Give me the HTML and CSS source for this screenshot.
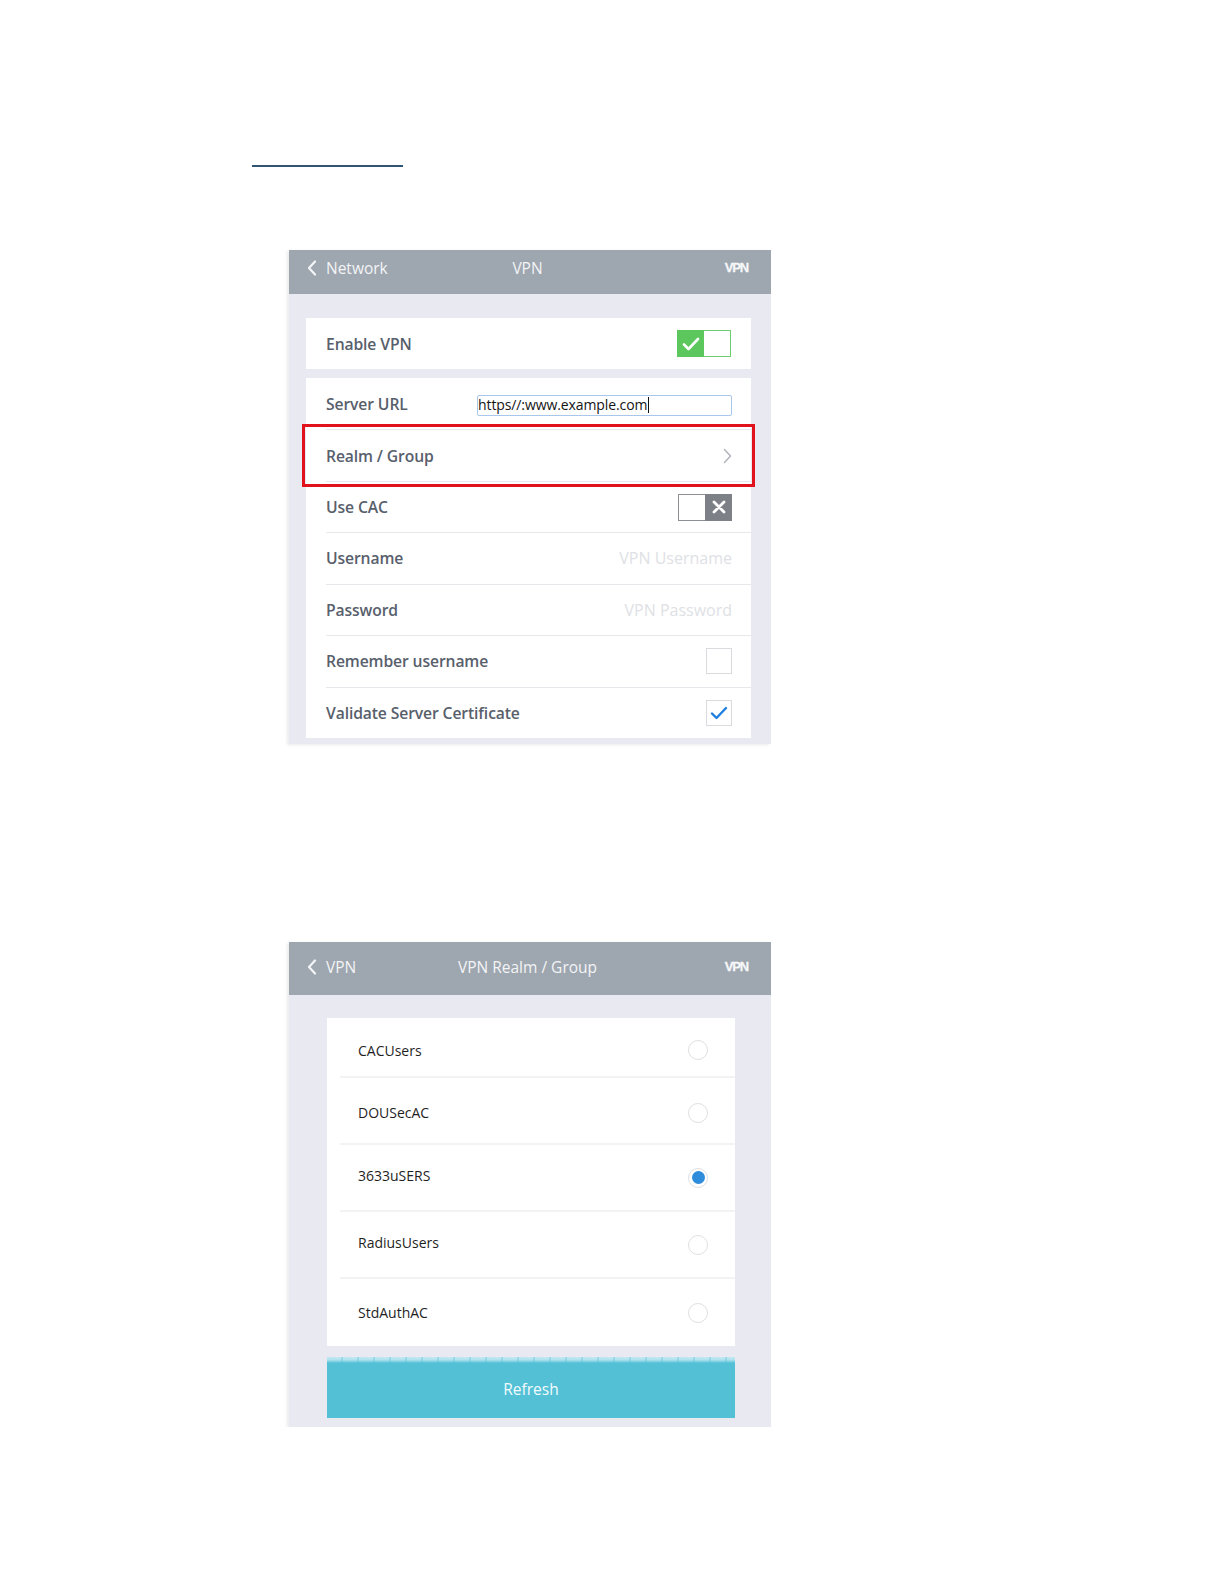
FILE: index.html
```html
<!DOCTYPE html>
<html>
<head>
<meta charset="utf-8">
<link rel="stylesheet" href="styles.css">
</head>
<body>
<div class="page">
  <div class="rule"></div>

  <section class="panel panel-vpn">
    <header class="bar bar-short">
      <div class="back">
        <svg class="chev" width="10" height="16" viewBox="0 0 10 16"><polyline points="8,1.5 2,8 8,14.5" fill="none" stroke="#f4f5f7" stroke-width="2.2" stroke-linecap="round" stroke-linejoin="round"/></svg>
        <span>Network</span>
      </div>
      <div class="title">VPN</div>
      <div class="logo">VPN</div>
    </header>
    <div class="body body-vpn">
      <div class="card card-single">
        <div class="row">
          <span class="label">Enable VPN</span>
          <span class="toggle toggle-on">
            <span class="half half-green">
              <svg width="18" height="14" viewBox="0 0 18 14"><polyline points="2,7.5 6.5,12 16,2" fill="none" stroke="#ffffff" stroke-width="2.6" stroke-linecap="round" stroke-linejoin="round"/></svg>
            </span>
            <span class="half half-white"></span>
          </span>
        </div>
      </div>

      <div class="card card-form">
        <div class="row">
          <span class="label label-fixed">Server URL</span>
          <div class="url-field"><span class="url-text">https//:www.example.com</span><span class="caret"></span></div>
        </div>
        <div class="row sep">
          <span class="label">Realm / Group</span>
          <svg class="chev-right" width="9" height="16" viewBox="0 0 9 16"><polyline points="1.5,1.5 7.5,8 1.5,14.5" fill="none" stroke="#b3b7bd" stroke-width="1.6" stroke-linecap="round" stroke-linejoin="round"/></svg>
        </div>
        <div class="row sep">
          <span class="label">Use CAC</span>
          <span class="toggle toggle-off">
            <span class="half half-blank"></span>
            <span class="half half-grey">
              <svg width="14" height="14" viewBox="0 0 14 14"><path d="M2 2 L12 12 M12 2 L2 12" fill="none" stroke="#ffffff" stroke-width="2.8" stroke-linecap="round"/></svg>
            </span>
          </span>
        </div>
        <div class="row sep">
          <span class="label">Username</span>
          <span class="placeholder">VPN Username</span>
        </div>
        <div class="row sep">
          <span class="label">Password</span>
          <span class="placeholder">VPN Password</span>
        </div>
        <div class="row sep">
          <span class="label">Remember username</span>
          <span class="checkbox"></span>
        </div>
        <div class="row sep">
          <span class="label">Validate Server Certificate</span>
          <span class="checkbox">
            <svg width="18" height="14" viewBox="0 0 18 14"><polyline points="2,7.5 6.5,12 16,2" fill="none" stroke="#1f7fe0" stroke-width="2.4" stroke-linecap="round" stroke-linejoin="round"/></svg>
          </span>
        </div>
        <div class="highlight"></div>
      </div>
    </div>
  </section>

  <section class="panel panel-realm">
    <header class="bar bar-tall">
      <div class="back">
        <svg class="chev" width="10" height="16" viewBox="0 0 10 16"><polyline points="8,1.5 2,8 8,14.5" fill="none" stroke="#f4f5f7" stroke-width="2.2" stroke-linecap="round" stroke-linejoin="round"/></svg>
        <span>VPN</span>
      </div>
      <div class="title">VPN Realm / Group</div>
      <div class="logo">VPN</div>
    </header>
    <div class="body body-realm">
      <div class="card card-list">
        <div class="item item-first"><span class="item-label">CACUsers</span><span class="radio"></span></div>
        <div class="item item-second"><span class="item-label">DOUSecAC</span><span class="radio"></span></div>
        <div class="item item-mid"><span class="item-label">3633uSERS</span><span class="radio radio-on"><span class="dot"></span></span></div>
        <div class="item item-mid"><span class="item-label">RadiusUsers</span><span class="radio"></span></div>
        <div class="item item-last"><span class="item-label">StdAuthAC</span><span class="radio"></span></div>
      </div>
      <div class="refresh">Refresh</div>
    </div>
  </section>
</div>
</body>
</html>
```

FILE: styles.css
```css
* { box-sizing: border-box; }

html, body {
  margin: 0;
  padding: 0;
  background: #ffffff;
}

body {
  font-family: "Open Sans", "Noto Sans", "Liberation Sans", sans-serif;
}

.page {
  padding-top: 165px;
  padding-left: 252px;
}

.rule {
  width: 151px;
  height: 2px;
  background: #2f5572;
}

.panel {
  width: 482px;
  margin-left: 37px;
  background: #e9e9f1;
  box-shadow: -2px 1px 3px rgba(60, 60, 80, 0.10);
}

.panel-vpn { margin-top: 83px; }
.panel-realm { margin-top: 198px; }

.bar {
  display: grid;
  grid-template-columns: 1fr auto 1fr;
  align-items: center;
  background: #9ea6af;
  color: #f3f4f6;
  padding: 0 23px 0 18px;
  font-size: 15.5px;
}

.bar-short { height: 44px; padding-bottom: 9px; }
.bar-tall { height: 53px; padding-bottom: 4px; }

.back {
  display: flex;
  align-items: center;
  gap: 9px;
}

.chev { display: block; }

.title {
  text-align: center;
}

.logo {
  justify-self: end;
  font-family: "Liberation Sans", "DejaVu Sans", sans-serif;
  font-weight: 700;
  font-size: 13px;
  letter-spacing: -1.2px;
  color: #f6f7f9;
  -webkit-text-stroke: 0.3px #f6f7f9;
}

.body-vpn {
  padding: 24px 20px 6px 17px;
}

.card {
  background: #ffffff;
}

.card-single {
  height: 51px;
  margin-bottom: 9px;
  display: flex;
}

.card-single .row {
  flex: 1;
}

.card-form {
  position: relative;
  height: 360px;
  display: grid;
  grid-template-rows: repeat(7, 1fr);
}

.row {
  display: flex;
  align-items: center;
  justify-content: space-between;
  margin-left: 20px;
  padding-right: 19px;
}

.card-single .row { padding-right: 20px; }

.row.sep {
  border-top: 1px solid #e7e8eb;
}

.label {
  font-size: 15.7px;
  font-weight: 600;
  letter-spacing: -0.12px;
  color: #58606c;
}

.label-fixed {
  width: 151px;
  flex: none;
}

.url-field {
  flex: none;
  width: 255px;
  height: 21px;
  border: 1.5px solid #a9c6ec;
  border-radius: 2px;
  display: flex;
  align-items: center;
  padding-left: 0;
  margin-top: 3px;
}

.url-text {
  font-size: 14px;
  letter-spacing: -0.1px;
  color: #141414;
  line-height: 16px;
}

.caret {
  width: 1px;
  height: 16px;
  background: #111;
  margin-left: 1px;
}

.chev-right { display: block; margin-right: 0; }

.toggle {
  display: flex;
  width: 54px;
  height: 27px;
  flex: none;
}

.half {
  width: 27px;
  height: 27px;
  display: flex;
  align-items: center;
  justify-content: center;
}

.half-green { background: #5cc75d; }
.half-white {
  background: #ffffff;
  border: 1px solid #6fcd6e;
  border-left: none;
}

.half-blank {
  background: #ffffff;
  border: 1px solid #8c9096;
  border-right: none;
}
.half-grey { background: #7d8187; }

.placeholder {
  font-size: 16px;
  color: #dee1e5;
}

.checkbox {
  width: 26px;
  height: 26px;
  border: 1px solid #d9dbde;
  display: flex;
  align-items: center;
  justify-content: center;
  flex: none;
}

.highlight {
  position: absolute;
  left: -4px;
  top: 46px;
  width: 453px;
  height: 63px;
  border: 3px solid #e1121b;
  pointer-events: none;
}

/* Realm panel */
.body-realm {
  padding: 23px 36px 9px 38px;
}

.card-list {
  height: 328px;
  display: flex;
  flex-direction: column;
}

.item {
  display: flex;
  align-items: center;
  justify-content: space-between;
  height: 67px;
  margin-left: 13px;
  padding-left: 18px;
  padding-right: 27px;
  border-top: 2px solid #f3f3f5;
}

.item-first {
  height: 58px;
  border-top: none;
  padding-top: 6px;
}

.item-second {
  padding-top: 4px;
}

.item-mid .item-label {
  margin-top: -4px;
}

.item-last {
  flex: 1;
  height: auto;
}

.item-label {
  font-size: 14px;
  color: #1f1f1f;
}

.radio {
  width: 20px;
  height: 20px;
  border-radius: 50%;
  border: 1px solid #dfe0e3;
  background: #ffffff;
  display: flex;
  align-items: center;
  justify-content: center;
  flex: none;
}

.dot {
  width: 13px;
  height: 13px;
  border-radius: 50%;
  background: #2f8cdb;
}

.refresh {
  position: relative;
  margin-top: 11px;
  height: 61px;
  background: #53c0d6;
  color: #f2fbfd;
  font-size: 15.5px;
  display: flex;
  align-items: center;
  justify-content: center;
  padding-top: 2px;
}

.refresh::before {
  content: "";
  position: absolute;
  left: 0;
  right: 0;
  top: 0;
  height: 6px;
  background:
    linear-gradient(to bottom, rgba(83,192,214,0) 0, rgba(83,192,214,0.2) 50%, #53c0d6 100%),
    repeating-linear-gradient(90deg, #c4e9f3 0, #c4e9f3 14px, #9fdbea 14px, #9fdbea 16px);
}
```
